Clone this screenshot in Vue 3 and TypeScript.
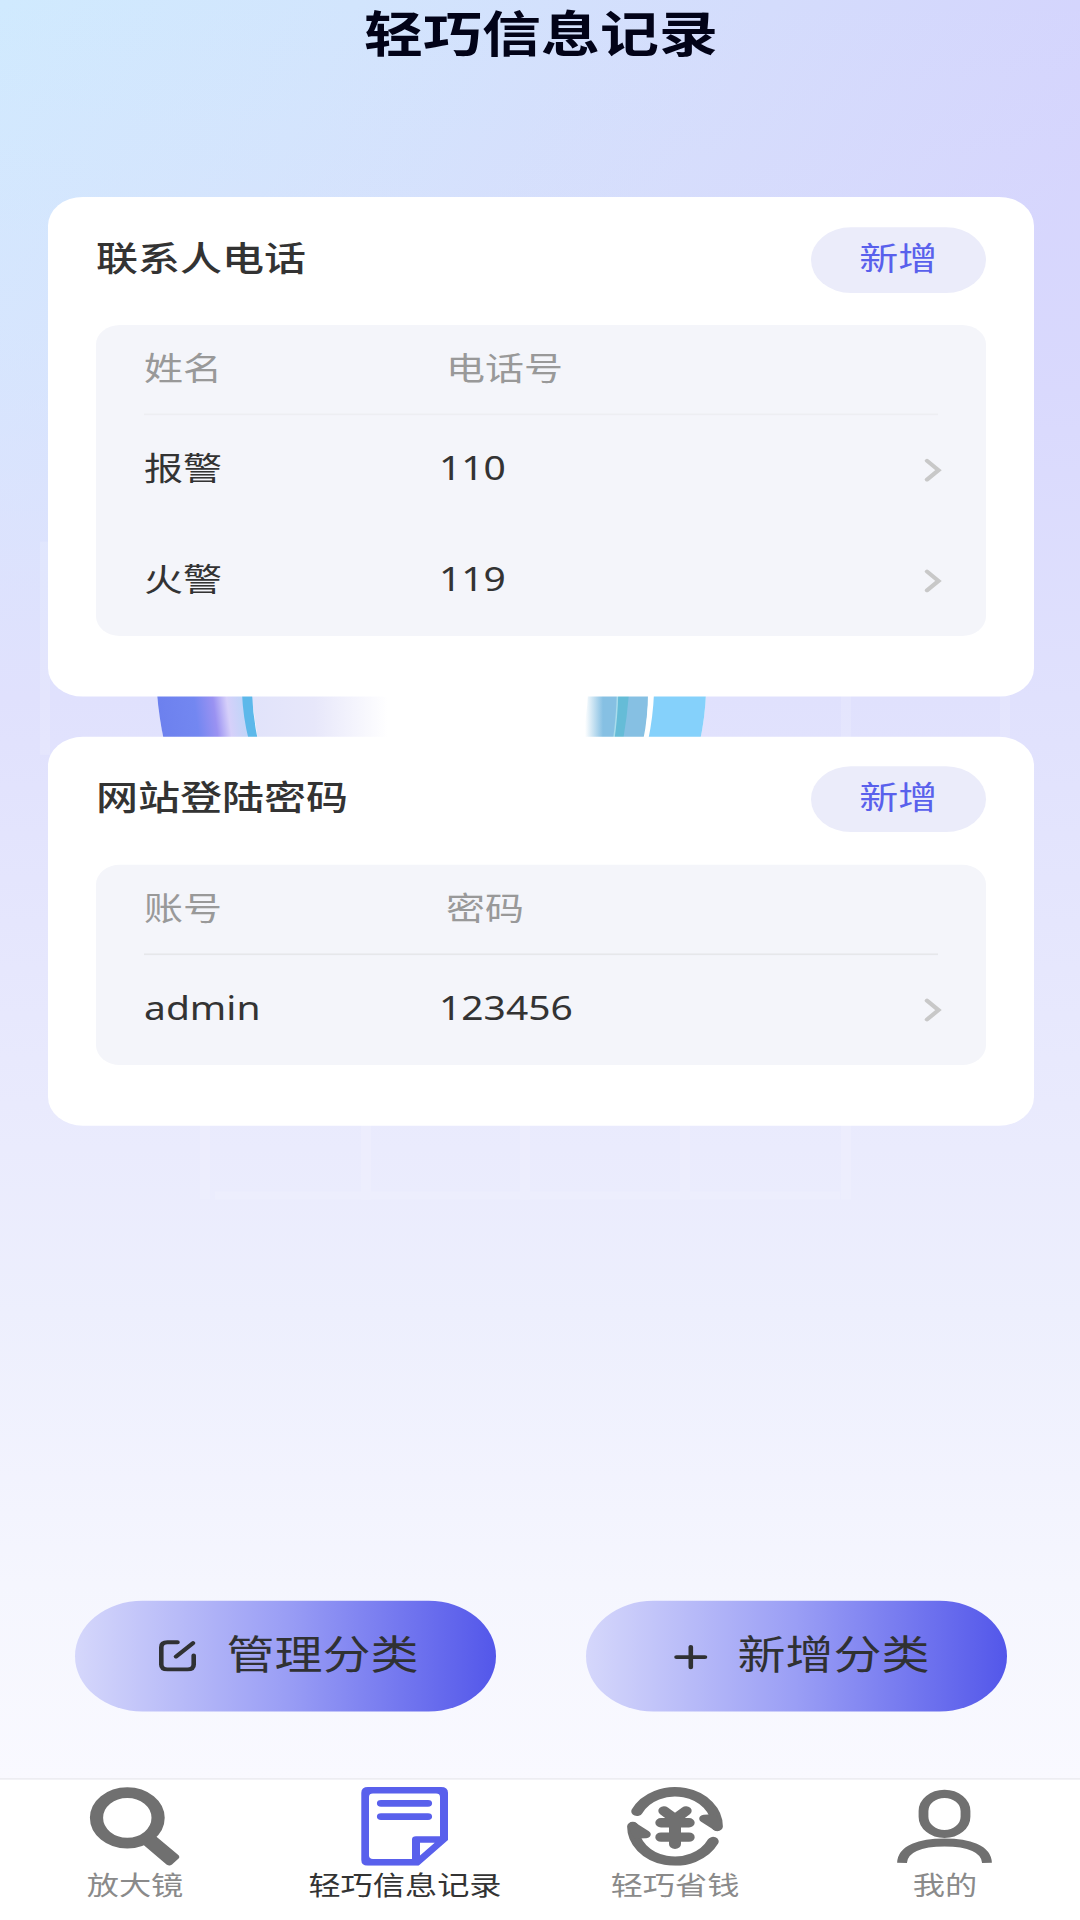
<script setup lang="ts">
interface Row {
  label: string
  value: string
}
interface Category {
  title: string
  columns: [string, string]
  rows: Row[]
  strong: boolean
}

const categories: Category[] = [
  {
    title: '联系人电话',
    columns: ['姓名', '电话号'],
    rows: [
      { label: '报警', value: '110' },
      { label: '火警', value: '119' },
    ],
    strong: false,
  },
  {
    title: '网站登陆密码',
    columns: ['账号', '密码'],
    rows: [{ label: 'admin', value: '123456' }],
    strong: true,
  },
]

const gridLines: number[] = [200, 361, 520, 680, 841]
</script>

<template>
  <div class="viewport">
    <div class="page">
      <svg class="backdrop" viewBox="0 0 1080 2340" aria-hidden="true">
        <defs>
          <linearGradient id="ringLeft" gradientUnits="userSpaceOnUse" x1="157" y1="0" x2="243" y2="0" gradientTransform="skewX(6) translate(-92 0)">
            <stop offset="0" stop-color="#6c80ee" />
            <stop offset=".46" stop-color="#7387f1" />
            <stop offset=".68" stop-color="#9a92f2" />
            <stop offset=".84" stop-color="#d6d0fa" />
            <stop offset="1" stop-color="#c3d4f8" />
          </linearGradient>
          <linearGradient id="coreFade" gradientUnits="userSpaceOnUse" x1="254" y1="0" x2="388" y2="0">
            <stop offset="0" stop-color="#e1e3fa" />
            <stop offset=".45" stop-color="#e7e7fa" />
            <stop offset="1" stop-color="#fff" />
          </linearGradient>
          <linearGradient id="ringRight" gradientUnits="userSpaceOnUse" x1="585" y1="0" x2="603" y2="0">
            <stop offset="0" stop-color="#fff" />
            <stop offset="1" stop-color="#86c0e3" />
          </linearGradient>
        </defs>
        <g fill="#fff" opacity=".14">
          <rect v-for="x in gridLines" :key="x" :x="x" y="1370" width="10" height="92" />
          <rect x="215" y="1452" width="625" height="10" />
          <rect x="40" y="660" width="10" height="260" />
          <rect x="841" y="840" width="10" height="70" />
          <rect x="1000" y="840" width="10" height="70" />
        </g>
        <path d="M157 845Q159 875 164 903H700Q705 875 706 845Z" fill="#fff" />
        <path d="M157 845Q159 875 164 903H252L243 845Z" fill="url(#ringLeft)" />
        <path d="M251 845L258 903H400V845Z" fill="url(#coreFade)" />
        <path d="M242 845Q243 875 249 903H258Q253 875 252 845Z" fill="#5cb8ea" />
        <path d="M588 845Q587 875 581 903H645L649 845Z" fill="url(#ringRight)" />
        <path d="M618 845Q617 875 613 903H623Q627 875 629 845Z" fill="#65bcd7" />
        <path d="M617.500 845Q617 875 613.500 903" fill="none" stroke="#a9dcec" stroke-width="1.500" />
        <path d="M648 845Q648 875 643 903H648Q653 875 654 845Z" fill="#fff" />
        <path d="M654 845Q653 875 648 903H700Q705 875 706 845Z" fill="#85d1fb" />
      </svg>

      <h1 class="title">轻巧信息记录</h1>

      <main class="cards">
        <section v-for="c in categories" :key="c.title" class="card">
          <header class="card-head">
            <h2>{{ c.title }}</h2>
            <button class="add">新增</button>
          </header>
          <div class="table">
            <div class="thead" :class="{ strong: c.strong }">
              <span class="col">{{ c.columns[0] }}</span>
              <span class="col-value">{{ c.columns[1] }}</span>
            </div>
            <div v-for="r in c.rows" :key="r.label" class="row">
              <span class="col">{{ r.label }}</span>
              <span class="value">{{ r.value }}</span>
              <svg class="chevron" width="20" height="32" viewBox="0 0 20 32">
                <path d="M4 4.500L15.500 16L4 27.500" fill="none" stroke="#c8c8c8" stroke-width="4.600" stroke-linecap="round" />
              </svg>
            </div>
          </div>
        </section>
      </main>

      <div class="actions">
        <button class="action">
          <svg width="40" height="40" viewBox="0 0 40 40" fill="none" stroke="#303133" stroke-width="4.600" stroke-linecap="round" stroke-linejoin="round">
            <path d="M20.500 3.500H10.500Q4.300 3.500 4.300 9.500V30.500Q4.300 36.500 10.500 36.500H30.500Q36.700 36.500 36.700 30.500V19.500M36 4.500L19 21" />
          </svg>
          <span>管理分类</span>
        </button>
        <button class="action">
          <svg width="40" height="40" viewBox="0 0 40 40" fill="none" stroke="#303133" stroke-width="4.600" stroke-linecap="round">
            <path d="M8.500 21.500H37M22.800 9V34" />
          </svg>
          <span>新增分类</span>
        </button>
      </div>

      <nav class="tabs">
        <div class="tab">
          <svg width="96" height="96" viewBox="0 0 96 96">
            <circle cx="40.300" cy="37.500" r="30.800" fill="none" stroke="#707070" stroke-width="13.200" />
            <path d="M68 59L91 82.500Q93.500 85 91.300 87.500L85 94.500Q82.500 97 79.500 94.500L56 70Z" fill="#707070" />
          </svg>
          <span>放大镜</span>
        </div>
        <div class="tab active">
          <svg width="96" height="96" viewBox="0 0 96 96">
            <path fill="#5960ec" fill-rule="evenodd" d="M11 0H84Q91 0 91 7V64.500L61.500 96H11Q4.300 96 4.300 89V7Q4.300 0 11 0ZM16 7.800Q12 7.800 12 12V83.500Q12 87.700 16 87.700H55V64Q55 60 59 60H83V12Q83 7.800 79 7.800ZM63 68V83.500L77.700 68Z" />
            <path d="M24 19.800H71M24 36H71" stroke="#5960ec" stroke-width="8.200" stroke-linecap="round" />
          </svg>
          <span>轻巧信息记录</span>
        </div>
        <div class="tab">
          <svg width="96" height="96" viewBox="0 0 96 96" fill="none" stroke="#707070" stroke-linecap="round" stroke-linejoin="round">
            <path d="M10 29.600A42.200 42.200 0 0 1 90.200 48" stroke-width="11.400" />
            <path d="M77 38.500L86 38L90 48.500Z" fill="#707070" stroke-width="9.500" />
            <path d="M86 66.400A42.200 42.200 0 0 1 5.800 48" stroke-width="11.400" />
            <path d="M19 57.500L10 58L6 47.500Z" fill="#707070" stroke-width="9.500" />
            <path d="M37 29L48 39L59 29M34 43.500H62M34 61H62" stroke-width="11.400" />
            <path d="M48 40V69.500" stroke-width="12" />
          </svg>
          <span>轻巧省钱</span>
        </div>
        <div class="tab">
          <svg width="96" height="96" viewBox="0 0 96 96" fill="none" stroke="#707070" stroke-width="9.800">
            <rect x="26.500" y="8.300" width="42" height="48.800" rx="21" />
            <path d="M5 92.500C5.500 75 23.500 67.500 47.500 67.500S89.500 75 90 92.500" />
          </svg>
          <span>我的</span>
        </div>
      </nav>
    </div>
  </div>
</template>

<style>
body {
  margin: 0;
}
</style>

<style scoped>
.viewport {
  width: 1080px;
  height: 1920px;
  overflow: hidden;
}
/* 1080 x 2340 layout fitted to a 1080 x 1920 window */
.page {
  position: relative;
  display: flex;
  flex-direction: column;
  width: 1080px;
  height: 2340px;
  transform: scaleY(0.820513);
  transform-origin: 0 0;
  font-family: 'Noto Sans', 'Noto Sans CJK SC', sans-serif;
  color: #333;
  background:
    linear-gradient(180deg, rgba(224, 225, 253, 0) 0, rgba(224, 225, 253, 0.4) 460px, #e0e1fd 850px, #eaebfd 1400px, #edeffd 1600px, #f2f3fe 1800px, #f5f6fe 1930px, #f9f9ff 2170px),
    linear-gradient(112deg, #d0eafe 0, #d2e5fd 330px, #d4dcfc 720px, #d4d3fd 1080px);
}
.backdrop {
  position: absolute;
  inset: 0;
  width: 1080px;
  height: 2340px;
}
.title {
  position: relative;
  margin: 0;
  height: 240px;
  line-height: 80px;
  font-size: 59px;
  font-weight: 700;
  text-align: center;
  text-indent: 2px;
  color: #020318;
}
.cards {
  position: relative;
  display: flex;
  flex-direction: column;
  gap: 49px;
  padding: 0 46px 0 48px;
}
.card {
  padding: 36.600px 48.500px 73.700px 48px;
  border-radius: 35px;
  background: #fff;
}
.card-head {
  display: flex;
  justify-content: space-between;
  height: 119.500px;
}
h2 {
  margin: 0;
  font-size: 42px;
  line-height: 74px;
  font-weight: 500;
}
button {
  border: 0;
  padding: 0;
  font-family: inherit;
}
.add {
  width: 174.500px;
  height: 80px;
  border-radius: 40px;
  background: #ebecfa;
  color: #5960ec;
  font-size: 39px;
  line-height: 74px;
  padding-bottom: 6px;
}
.table {
  padding: 0 36px 0 48px;
  border-radius: 24px;
  background: #f4f5fa;
}
.thead {
  display: flex;
  height: 108px;
  margin-right: 12px;
  border-bottom: 2px solid #edeef2;
  font-size: 39px;
  line-height: 103px;
  color: #999;
}
.thead.strong {
  border-color: #e6e7ea;
}
.col {
  width: 302px;
}
.row {
  display: flex;
  align-items: center;
  height: 134.500px;
  font-size: 39px;
  line-height: 80px;
}
.row .col {
  width: 295px;
}
.row span {
  padding-bottom: 6px;
}
.value {
  flex: 1;
}
.chevron {
  margin-right: 6.500px;
}
.actions {
  position: relative;
  display: flex;
  gap: 90px;
  margin: auto 73px 81.500px 75px;
}
.action {
  display: flex;
  align-items: center;
  gap: 29.500px;
  width: 421px;
  height: 134.500px;
  padding-left: 82px;
  border-radius: 67.500px;
  background: linear-gradient(90deg, #d5d7fb, #9a9ef5 50%, #5357ea);
  color: #303133;
  font-size: 48px;
}
.action span {
  padding-bottom: 11px;
}
.tabs {
  position: relative;
  display: flex;
  height: 162px;
  padding-top: 9px;
  border-top: 2px solid #ededf2;
  background: #fff;
}
.tab {
  flex: 1;
  display: flex;
  flex-direction: column;
  align-items: center;
  font-size: 32.200px;
  line-height: 48px;
  color: #8a8a8a;
  white-space: nowrap;
}
.tab.active {
  color: #333;
}
</style>
